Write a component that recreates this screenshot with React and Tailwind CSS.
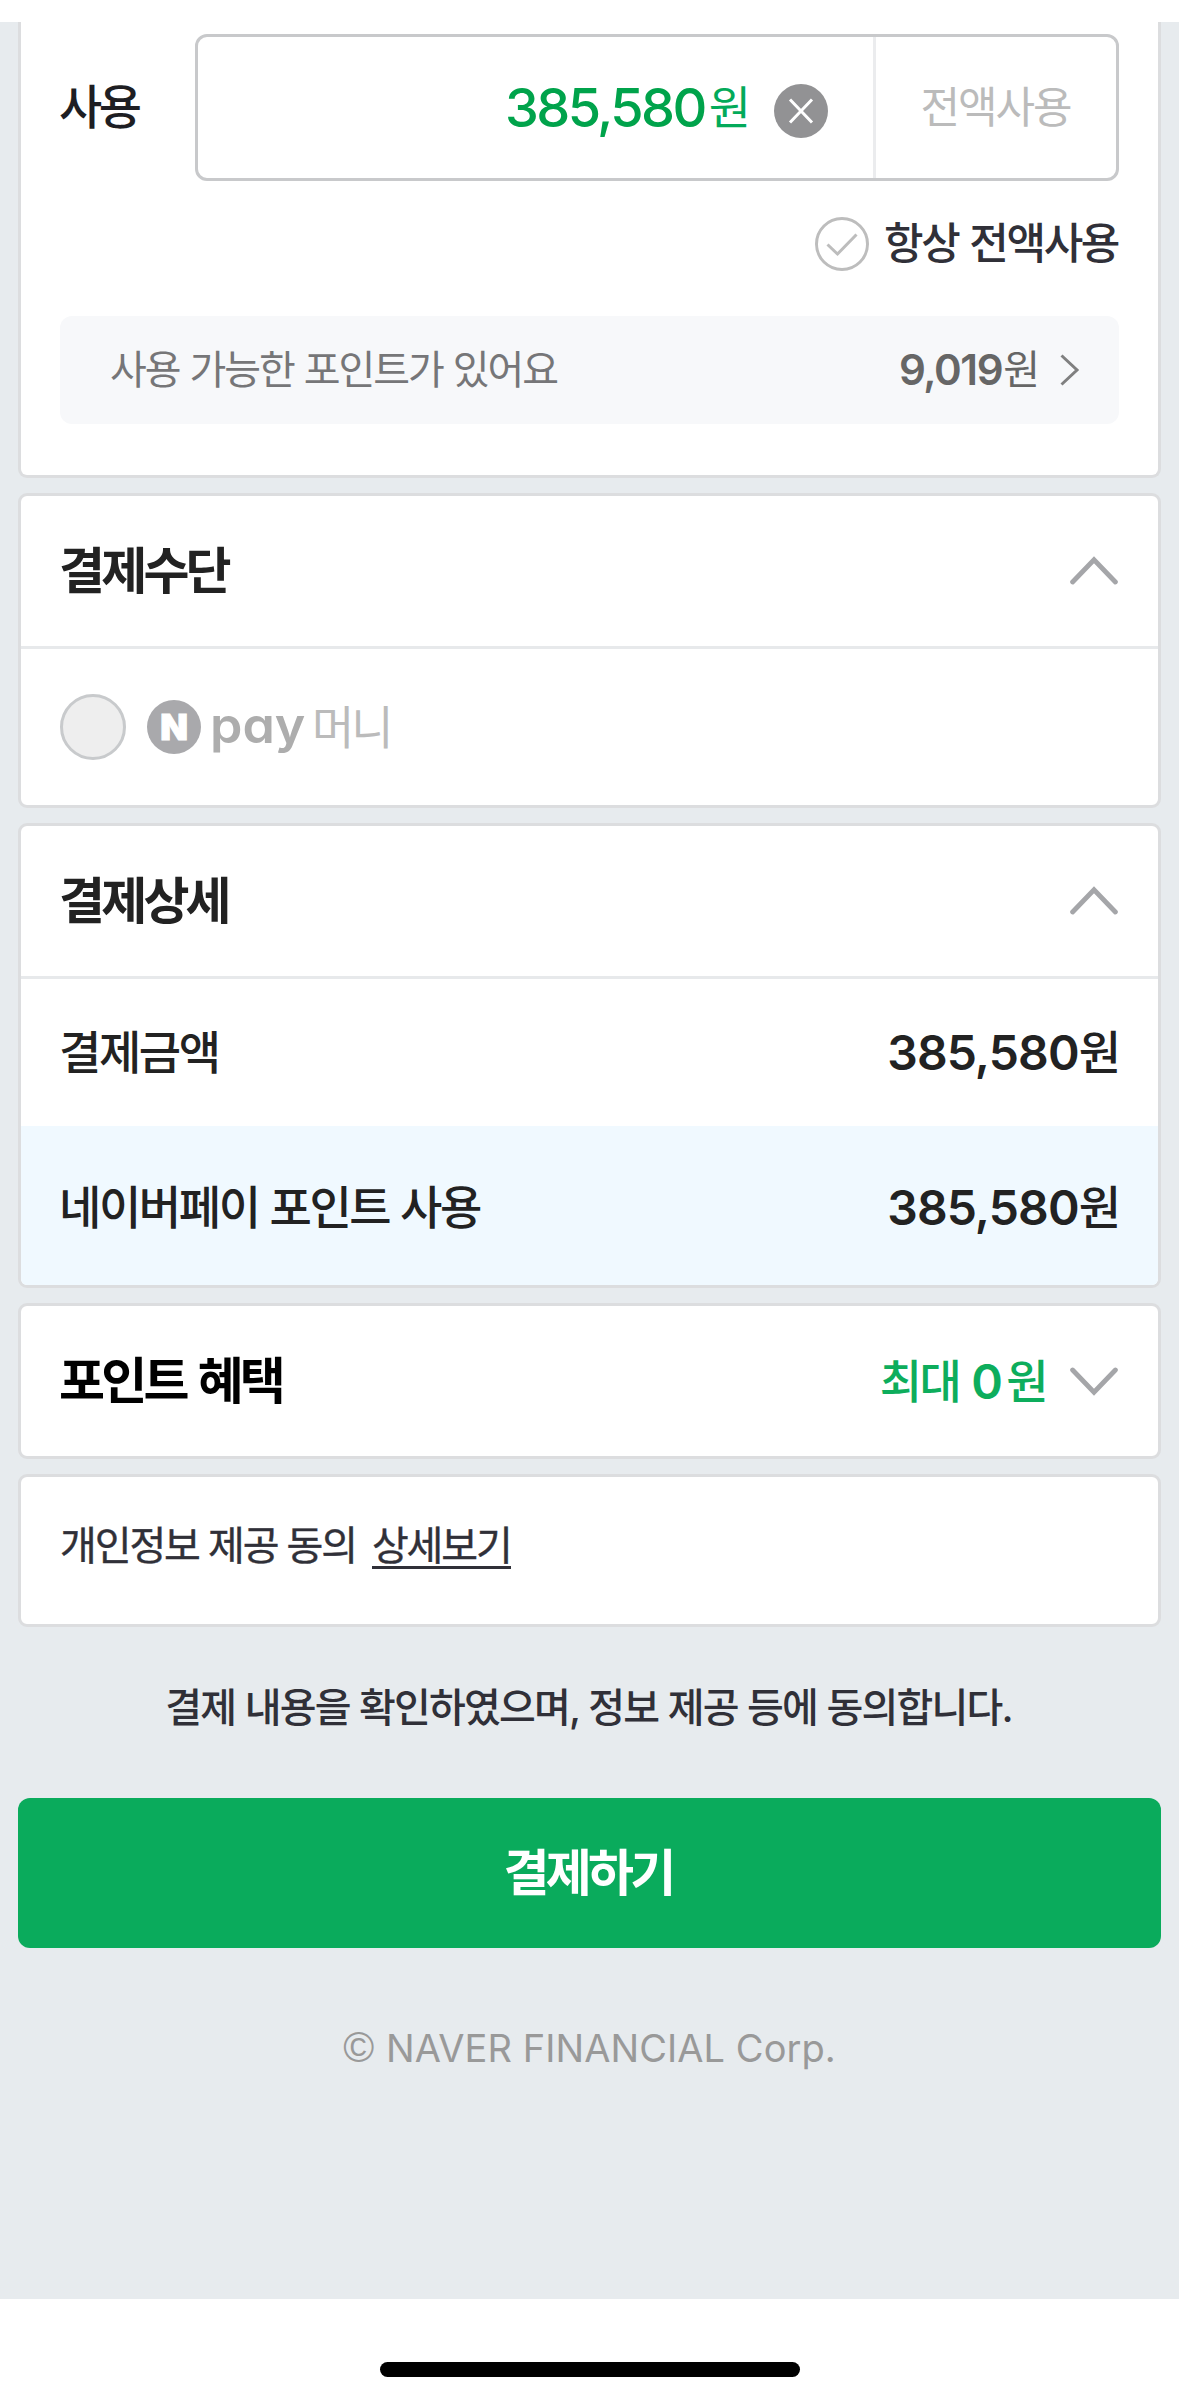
import React from 'react';

const Card = ({ className = '', children }) => (
  <section className={`rounded-[9px] border-[3px] border-[#dcdddf] bg-white overflow-hidden ${className}`}>
    {children}
  </section>
);

const Fold = ({ open }) => (
  <svg width="48" height="30" viewBox="0 0 48 30" fill="none" stroke="#a5a6a9" strokeWidth="4.8" strokeLinecap="round">
    <path d={open ? 'M2.6 26 L24 3.8 L45.4 26' : 'M2.6 4 L24 26.2 L45.4 4'} />
  </svg>
);

const SectionTitle = ({ title, open = true, children }) => (
  <div className="flex h-[150px] items-center justify-between pl-[38px] pr-[40px]">
    <h2 className="text-[50px] leading-none font-bold tracking-[-3.8px] [word-spacing:4px]">{title}</h2>
    <div className="flex items-center">
      {children}
      <Fold open={open} />
    </div>
  </div>
);

const details = [
  { label: '결제금액', amount: '385,580', row: 'h-[147px] pb-[2px]' },
  { label: '네이버페이 포인트 사용', amount: '385,580', row: 'h-[159px] bg-[#f0f9ff] pt-[3px]' },
];

export default function App() {
  return (
    <div className="flex h-[2401px] w-[1179px] flex-col bg-white pt-[22px] font-['Inter','Noto_Sans_CJK_KR',sans-serif] text-[#222]">
      <main className="flex h-[2277px] flex-col bg-[#e7ebee] px-[18px]">
        {/* 포인트 사용 */}
        <Card className="h-[456px] rounded-t-none border-t-0 px-[39px] pt-[12px]">
          <div className="flex h-[147px] items-center">
            <span className="w-[135px] pb-[3px] text-[47px] leading-none font-medium tracking-[-3.4px] text-[#1e1e23]">
              <span className="-ml-px">사용</span>
            </span>
            <div className="flex h-full w-[924px] rounded-[12px] border-[3px] border-[#c8c9cb]">
              <div className="flex flex-1 items-center justify-end pr-[45px]">
                <span className="text-[54px] leading-none font-medium tracking-[-2.6px] text-[#00a34b]">385,580</span>
                <span className="ml-[4px] pb-[2px] text-[46px] leading-none tracking-[-2px] text-[#03aa5a]">원</span>
                <svg className="mt-[6px] ml-[25px]" width="54" height="54" viewBox="0 0 54 54" fill="none">
                  <circle cx="27" cy="27" r="27" fill="#929294" />
                  <path d="M16 15.5 L38 38.5 M38 15.5 L16 38.5" stroke="#fff" strokeWidth="3" />
                </svg>
              </div>
              <button className="w-[243px] border-l-[3px] border-[#ebecee] pr-px text-[43px] leading-none tracking-[-2.1px] text-[#bbb]">
                전액사용
              </button>
            </div>
          </div>
          <div className="mt-[36px] flex h-[54px] items-center justify-end pr-px">
            <svg width="54" height="54" viewBox="0 0 54 54" fill="none" stroke="#bdbdbd">
              <circle cx="27" cy="27" r="25.5" strokeWidth="3" />
              <path d="M12.5 27.5 L22.5 37 L41.5 17.5" strokeWidth="3" />
            </svg>
            <span className="ml-[15px] pb-[2px] text-[43px] leading-none font-medium tracking-[-2.4px] text-[#303038] [word-spacing:2px]">
              항상 전액사용
            </span>
          </div>
          <div className="mt-[45px] flex h-[108px] items-center justify-between rounded-[12px] bg-[#f7f8fa] pl-[50px] pr-[39px]">
            <span className="text-[40px] leading-none tracking-[-2.1px] text-[#767678] [word-spacing:1px]">사용 가능한 포인트가 있어요</span>
            <div className="flex items-center text-[#666]">
              <span className="text-[42px] leading-none font-semibold tracking-[-1.4px]">9,019</span>
              <span className="ml-px text-[40px] leading-none tracking-[-3px]">원</span>
              <svg className="ml-[23px]" width="20" height="32" viewBox="0 0 20 32" fill="none">
                <path d="M1.5 1.5 L17 16 L1.5 30.5" stroke="#808080" strokeWidth="3" />
              </svg>
            </div>
          </div>
        </Card>

        {/* 결제수단 */}
        <Card className="mt-[15px] h-[315px]">
          <SectionTitle title="결제수단" />
          <div className="flex h-[159px] items-center border-t-[3px] border-[#e7e9eb] pl-[39px]">
            <span className="h-[66px] w-[66px] rounded-full border-[3px] border-[#c8cacc] bg-[#eee]" />
            <span className="ml-[21px] flex h-[54px] w-[54px] items-center justify-center rounded-full bg-[#a9a9ac] text-[36px] leading-none font-black text-white [-webkit-text-stroke:1px_#fff]">
              N
            </span>
            <span className="ml-[9px] w-[102px] origin-left scale-x-106 pb-[3px] text-[49px] leading-none font-semibold text-[#adadad] [font-feature-settings:'cv11']">
              pay
            </span>
            <span className="text-[46px] leading-none tracking-[-3px] text-[#bbb]">머니</span>
          </div>
        </Card>

        {/* 결제상세 */}
        <Card className="mt-[15px] h-[465px]">
          <SectionTitle title="결제상세" />
          <div className="border-t-[3px] border-[#e7e9eb]">
            {details.map(({ label, amount, row }) => (
              <div key={label} className={`flex items-center justify-between pl-[38px] pr-[40px] ${row}`}>
                <span className="text-[46px] leading-none font-medium tracking-[-2.4px] [word-spacing:1px]">{label}</span>
                <span className="flex items-center">
                  <span className="pt-[2px] text-[48px] leading-none font-semibold tracking-[-0.9px]">{amount}</span>
                  <span className="text-[46px] leading-none font-medium tracking-[-3px]">원</span>
                </span>
              </div>
            ))}
          </div>
        </Card>

        {/* 포인트 혜택 */}
        <Card className="mt-[15px] h-[156px] border-[#d6dadf] text-black">
          <SectionTitle title="포인트 혜택" open={false}>
            <span className="mr-[24px] flex items-center text-[46px] leading-none font-medium tracking-[-2.6px] text-[#0dad5c]">
              <span>최대</span>
              <span className="ml-[12px] pt-[2px] text-[48px] font-semibold">0</span>
              <span className="ml-[6px]">원</span>
            </span>
          </SectionTitle>
        </Card>

        <Card className="mt-[15px] h-[153px] px-[39px] pt-[49px]">
          <p className="text-[40px] leading-none tracking-[-2.1px] text-[#303038] [-webkit-text-stroke:0.4px_#303038]">
            개인정보 제공 동의
            <a className="ml-[16px] inline-block border-b-[3px] border-[#303038]">상세보기</a>
          </p>
        </Card>

        <p className="mt-[61px] pr-[2px] text-center text-[40px] leading-none font-medium tracking-[-1.8px] text-[#303038] [word-spacing:0.5px]">
          결제 내용을 확인하였으며, 정보 제공 등에 동의합니다.
        </p>
        <button className="mt-[70px] h-[150px] shrink-0 rounded-[12px] bg-[#0aab5c] pr-[3px] text-[50px] leading-none font-semibold tracking-[-3.7px] text-white">
          결제하기
        </button>
        <footer className="mt-[79px] text-center text-[38px] leading-none tracking-[0.06px] text-[#999]">
          <span className="mr-px font-['Liberation_Sans'] text-[42px]">©</span> NAVER FINANCIAL Corp.
        </footer>
      </main>
      <div className="mx-auto mt-[63px] h-[15px] w-[420px] rounded-full bg-black" />
    </div>
  );
}
